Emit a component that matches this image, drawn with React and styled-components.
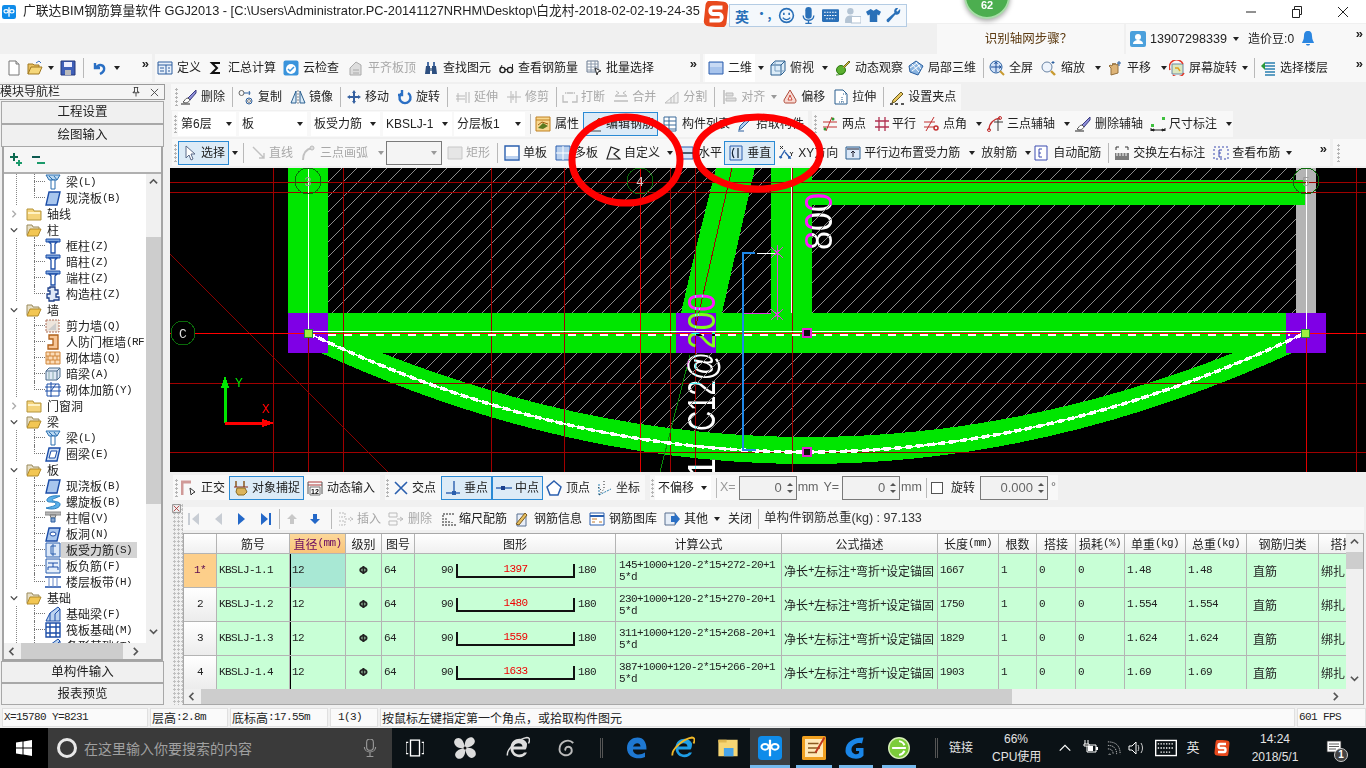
import React from 'react';
import styled, { createGlobalStyle } from 'styled-components';

const UI_FONT = '"Liberation Sans", "Noto Sans CJK SC", sans-serif';
const CJK_FONT = '"Noto Sans CJK SC", sans-serif';

const Global = createGlobalStyle`
  html, body { margin: 0; padding: 0; overflow: hidden; background: #f0f0f0; }
  * { box-sizing: border-box; }
`;

const icons = {
  newDoc: <><path d="M3 1h7l3 3v11H3z" fill="#fff" stroke="#777" /><path d="M10 1v3h3" fill="#ddd" stroke="#777" /></>,
  open: <><path d="M1 14V4h5l1 1h5v2" fill="#e8c060" stroke="#a07820" /><path d="M1 14l3-7h11l-3 7z" fill="#f5d77a" stroke="#a07820" /><path d="M9 3l3-2 2 2" fill="none" stroke="#3a70c0" /></>,
  save: <><path d="M1 1h14v14H1z" fill="#3f5fb8" stroke="#26397a" /><path d="M4 2h8v5H4z" fill="#eef" /><path d="M5 10h6v5H5z" fill="#bbb" /></>,
  undo: <path d="M3 3v5h5M4 8c3-5 9-3 8 2-.4 2-2 3-4 4" fill="none" stroke="#2a6fc4" strokeWidth="2.4" />,
  define: <><path d="M1 2h14v12H1z" fill="#e8f0fa" stroke="#2f5f9f" /><path d="M1 5h14M9 5v9M3 8h4M3 11h4M11 8h2M11 11h2" stroke="#2f5f9f" /></>,
  sigma: <path d="M12 3H4l5 5-5 5h8" fill="none" stroke="#111" strokeWidth="2" />,
  cloud: <><rect x="0.5" y="0.5" width="15" height="15" rx="2" fill="#3a94dc" /><circle cx="8" cy="9" r="5" fill="#fff" /><path d="M5 9l2 2 4-4" fill="none" stroke="#3a94dc" strokeWidth="1.5" /></>,
  flush: <><path d="M2 15V8l6-6 5 3v10z" fill="#ddd" stroke="#aaa" /><path d="M5 10h6M5 13h6" stroke="#aaa" /></>,
  binoc: <><path d="M2 14l1-8h4v8zM9 14V6h4l1 8z" fill="#2d4f80" /><path d="M4 2h2v4H4zM10 2h2v4h-2z" fill="#4a6fa5" /><path d="M7 8h2v3H7z" fill="#7a8fa8" /></>,
  glasses: <><circle cx="4.5" cy="10" r="2.6" fill="none" stroke="#222" strokeWidth="1.4" /><circle cx="12" cy="10" r="2.6" fill="none" stroke="#222" strokeWidth="1.4" /><path d="M7 9.5h2.5M2 9l2-4M14.5 9V4" stroke="#222" /></>,
  batch: <><path d="M1 1h11v11H1z" fill="#fff" stroke="#6a7a90" /><path d="M1 4h11M1 7h11M1 10h11M5 1v11M9 1v11" stroke="#8a98aa" /><path d="M9 8l6 3-3 1-1 3z" fill="#fff" stroke="#333" /></>,
  flat: <><path d="M1 2h14v12H1z" fill="#a8c4ec" stroke="#2c5fae" /><path d="M2 3h12v4H2z" fill="#c8daf4" /></>,
  topView: <><path d="M1 5l4-4h10v10l-4 4H1z" fill="#dcecf8" stroke="#2a5f8f" /><path d="M1 5h10v10M11 5l4-4" fill="none" stroke="#2a5f8f" /><path d="M5 1v10h10" fill="none" stroke="#7a9fc0" /></>,
  orbit: <><circle cx="6" cy="10" r="4.5" fill="#5cb030" stroke="#2d7a10" /><path d="M8 7l6-6 1 1-6 6" fill="#d8c040" stroke="#6a6a20" /><path d="M1 15c3 0 7-1 9-3" stroke="#3a8a20" fill="none" /></>,
  cube3d: <><path d="M8 1l7 5-5 9-8-3-1-6z" fill="#8ab4e0" stroke="#2a5f9f" /><path d="M4 4l7 8M8 2l5 7M2 8l7-5M4 11l8-6" stroke="#fff" /></>,
  full: <><circle cx="7" cy="7" r="6" fill="#cfe0f6" stroke="#2a5f9f" /><path d="M7 2v10M2 7h10M7 2L5.5 4M7 2l1.5 2M12 7l-2-1.5M12 7l-2 1.5" stroke="#1f4f9a" fill="none" /><path d="M11 11l4 4" stroke="#c89a30" strokeWidth="2" /></>,
  zoom: <><circle cx="6" cy="7" r="5" fill="#eef4fc" stroke="#6a84a4" /><path d="M10 11l4 4" stroke="#c89a30" strokeWidth="2.4" /><path d="M12 1v3M10.5 2.5h3" stroke="#2a5f9f" /></>,
  pan: <><path d="M4 15V8L2 6l1-1 2 1 1-3 1 2 1-2 1 2 2-1v9z" fill="#deb477" stroke="#94703c" /><path d="M12 1v5M10 3h4" stroke="#2a5f9f" /></>,
  screenRot: <><path d="M3 4h11v10H3z" fill="#dbe8bf" stroke="#6a88a4" /><path d="M6 8h3l2 3" stroke="#e0a020" fill="none" strokeWidth="1.4" /><path d="M1 10A7 7 0 0 1 14 4" fill="none" stroke="#e23a2a" strokeWidth="1.5" /><path d="M15 13A7 7 0 0 1 4 15" fill="none" stroke="#e23a2a" strokeWidth="1.5" /></>,
  floor: <><path d="M5 3h10M5 6h10M5 9h10M5 12h10M5 15h10" stroke="#2a7fb0" strokeWidth="1.6" /><path d="M1 6l4-4v8z" fill="#2b9a3a" /></>,
  brush: <><path d="M15 1l-8 8 2 2 6-7z" fill="#8d8fd8" stroke="#3a3a80" /><path d="M7 9c-3 0-3 3-5 4 3 2 6 0 7-2z" fill="#fff" stroke="#555" /><path d="M0 15h9" stroke="#222" /></>,
  copy: <><circle cx="3.5" cy="4" r="2.5" fill="none" stroke="#666" /><circle cx="11" cy="12" r="3" fill="none" stroke="#2a5f9f" /><circle cx="11" cy="12" r="1.5" fill="none" stroke="#888" /><path d="M6 4h6l-1-2M12 4l-1 2" fill="none" stroke="#2a5f9f" /></>,
  mirror: <><path d="M1 14L6 2v12zM15 14L10 2v12z" fill="#dcecf8" stroke="#2a5f8f" /><path d="M8 1v14" stroke="#888" strokeDasharray="2 1" /></>,
  move: <path d="M8 1l2 3H9v3h3V6l3 2-3 2V9H9v3h1l-2 3-2-3h1V9H4v1L1 8l3-2v1h3V4H6z" fill="#3560a0" />,
  rotate: <path d="M5 4a5.5 5.5 0 1 0 6 0M5 1v5H1" fill="none" stroke="#2a6fc4" strokeWidth="2.4" />,
  extend: <path d="M1 7h9M1 10h9M11 3v11M14 3v11M3 4v9" stroke="#b8b8b8" fill="none" />,
  trim: <path d="M1 8h14M5 2v12M10 2v12M7 5v6" stroke="#b8b8b8" fill="none" />,
  breakIt: <><path d="M1 6v7h5M15 6v7h-5M5 4h6" stroke="#bdbdbd" fill="none" strokeWidth="1.3" /><path d="M3 3l2 1-2 1M13 3l-2 1 2 1" fill="#bdbdbd" /></>,
  merge: <><path d="M2 7h12M1 12h14" stroke="#bdbdbd" strokeWidth="1.3" /><path d="M3 2l3 2-3 2M13 2l-3 2 3 2" fill="none" stroke="#bdbdbd" /></>,
  split: <><path d="M1 14L14 3v11z" fill="#f0f0f0" stroke="#bdbdbd" /><path d="M7 8v6M10 6v8" stroke="#bdbdbd" /></>,
  align: <><path d="M2 1v14" stroke="#bbb" strokeWidth="1.5" /><path d="M4 4h7v3H4zM4 9h10v3H4z" fill="#ddd" stroke="#bbb" /></>,
  offset: <><path d="M8 1l6 10c0 3-1 3-2 3H4c-1 0-2 0-2-3z" fill="#f7d9d2" stroke="#b04a3a" /><path d="M8 6l2 5H6z" fill="#fff" stroke="#d04a3a" /></>,
  stretch: <><path d="M2 1h8l4 4v10H2z" fill="#fff" stroke="#2a5f8f" /><path d="M10 5h4M9 8v5M6 13h5" stroke="#2a5f8f" strokeDasharray="1 1" /></>,
  gripPt: <><path d="M1 15h3M6 15h3M12 15h3" stroke="#222" strokeWidth="1.6" /><path d="M4 11l8-8 2 2-8 8-3 1z" fill="#e8c860" stroke="#6a5a20" /></>,
  prop: <><path d="M1 1h14v14H1z" fill="#f8d890" stroke="#c08020" /><path d="M1 4h14" stroke="#c08020" /><path d="M3 12l5-5 5 3-5 3z" fill="#5a7a20" /><path d="M3 9l4-3 6 2" stroke="#a06010" fill="none" /></>,
  editBar: <><path d="M2 14l2-4 8-8 3 3-8 8z" fill="#f0c040" stroke="#7a5a20" /><path d="M3 15h11" stroke="#444" /></>,
  list: <><path d="M2 1h12v14H2z" fill="#fff" stroke="#3a6a9a" /><path d="M2 5h12M2 9h12M2 13h12M7 1v14" stroke="#3a6a9a" /></>,
  pick: <path d="M3 14l1-4 8-8 2 2-8 8zM2 15h6" fill="#b0ccee" stroke="#2a5f9f" />,
  twoPt: <><path d="M1 6h14M1 11h14M10 1L4 15" stroke="#c23030" /><circle cx="11" cy="3" r="1.5" fill="#2f9a30" /><circle cx="3" cy="13" r="1.5" fill="#2f9a30" /></>,
  parallel: <path d="M1 5h14M1 11h14M5 1v14M11 1v14" stroke="#b03050" strokeWidth="1.3" />,
  anglePt: <><path d="M1 6h11M1 11h11M11 1L3 15" stroke="#c23030" /><circle cx="13" cy="12" r="2" fill="none" stroke="#c23030" strokeWidth="1.5" /></>,
  arcPt: <><path d="M2 14C2 7 7 3 13 2" fill="none" stroke="#c23030" strokeWidth="1.4" /><circle cx="2" cy="14" r="1.5" fill="none" stroke="#c23030" /><circle cx="13" cy="2" r="1.5" fill="none" stroke="#c23030" /><path d="M7 6h9M11 3v12" stroke="#3a3a3a" /></>,
  dim: <><path d="M1 12v3M15 12v3M1 14h14M1 14l3-1v2zM15 14l-3-1v2z" stroke="#222" fill="#222" /><rect x="1" y="8" width="3" height="3" fill="#3fc03f" /><rect x="12" y="1" width="3" height="3" fill="#3fc03f" /></>,
  cursor: <path d="M4 1v12l3-3 2 5 2-1-2-5h4z" fill="#fff" stroke="#5a6a88" />,
  lineTool: <path d="M2 2l11 11M13 8v5H8" fill="none" stroke="#c2c2c2" strokeWidth="1.4" />,
  arcTool: <><path d="M3 15C3 8 7 4 12 3" fill="none" stroke="#c2c2c2" strokeWidth="2" /><circle cx="12" cy="3" r="2" fill="#ddd" stroke="#bbb" /></>,
  rectTool: <path d="M1 2h14v12H1z" fill="#e6e6e6" stroke="#c8c8c8" />,
  single: <><path d="M1 1h14v14H1z" fill="#fff" stroke="#2a5fae" strokeWidth="1.4" /><path d="M2 11h12v3H2z" fill="#bcd2f0" /></>,
  multi: <><path d="M1 1h14v14H1z" fill="#b9d0ee" stroke="#2a5fae" /><path d="M8 1v14M1 8h14" stroke="#fff" /></>,
  custom: <path d="M2 14L6 2l8 3-5 4 6 5z" fill="none" stroke="#222" strokeWidth="1.2" />,
  horiz: <><path d="M1 2h14v12H1z" fill="#d5e4f7" stroke="#2a5fae" /><path d="M1 8h14" stroke="#123" strokeWidth="1.4" /></>,
  vert: <><path d="M2 1h12v14H2z" fill="#d5e4f7" stroke="#2a5fae" /><path d="M6 3c-2 3-2 7 0 10M10 3v10" fill="none" stroke="#123" strokeWidth="1.2" /></>,
  xyDir: <><path d="M2 13l5-8M2 13l2-1M2 13V11" stroke="#2a5fae" fill="none" strokeWidth="1.4" /><path d="M7 7l5 6-2 0M12 13v-2" stroke="#2a5fae" fill="none" strokeWidth="1.4" /><path d="M2 1l3 3M5 1L2 4M12 7l1.5 2 1.5-2M13.5 9v2" stroke="#333" fill="none" /></>,
  edgeBars: <><path d="M1 2h14v12H1z" fill="#dbe8f8" stroke="#2a5f8f" /><path d="M2 4h12M8 12V6M6 8l2-2 2 2" stroke="#223" fill="none" /></>,
  auto: <><path d="M2 1h12v14H2z" fill="#fff" stroke="#3a4ab0" /><path d="M9 4H6v8h3M6 8h2" stroke="#3a4ab0" fill="none" /></>,
  swap: <><path d="M1 8h14v7H1z" fill="#7a7a7a" /><path d="M3 8v3M6 8v3M9 8v3M12 8v3" stroke="#fff" /><path d="M2 2h3M2 2v3M14 2h-3M14 2v3" stroke="#333" /></>,
  viewBar: <><path d="M1 2h14v12H1z" fill="none" stroke="#3a4ab0" strokeDasharray="2 2" /><path d="M9 5H6v7h3M6 8h2" stroke="#3a4ab0" fill="none" /></>,
  ortho: <><path d="M1 15V2h9" fill="none" stroke="#d09a98" strokeWidth="3" /><path d="M9 8l5 4-2 1-2 2z" fill="#fff" stroke="#333" /></>,
  snap: <><path d="M3 1v6M11 1v6" stroke="#8a5a20" strokeWidth="1.5" /><path d="M1 7h14" stroke="#8a2a20" /><path d="M4 8h8l2 4-3 3H5l-2-3z" fill="#dcb45c" stroke="#8a6a20" /></>,
  dynInput: <><path d="M1 2h14M1 5h14" stroke="#b03a3a" /><path d="M1 2v12M15 2v12" stroke="#555" /><path d="M3 7h10v8H3z" fill="#fff" stroke="#777" /><text x="4" y="14" fontSize="7" fontFamily="Liberation Sans" fontWeight="700">12</text></>,
  crossPt: <path d="M2 2l12 12M14 2L2 14" stroke="#2a5fae" strokeWidth="1.6" />,
  perpPt: <><path d="M1 13h14" stroke="#2a5fae" strokeWidth="1.4" /><path d="M9 1v12" stroke="#2a5fae" strokeWidth="1.4" /><rect x="7" y="11" width="4" height="4" fill="#2a5fae" /></>,
  midPt: <><path d="M0 8h16" stroke="#2a5fae" strokeWidth="1.4" /><rect x="5" y="6" width="4" height="4" fill="#1a3f8e" /></>,
  vertexPt: <path d="M8 1l7 6-3 8H4L1 7z" fill="#fff" stroke="#2a5fae" strokeWidth="1.5" />,
  coord: <><path d="M3 15V3M3 15L15 9" stroke="#2a7fb0" strokeDasharray="2 1" /><path d="M2 7l3 3M8 1v8l-5 6" stroke="#222" strokeDasharray="1 2" fill="none" /></>,
  navFirst: <path d="M3 2h2v12H3zM14 2v12L7 8z" fill="#c8cdd4" />,
  navPrev: <path d="M12 2v12L5 8z" fill="#c8cdd4" />,
  navNext: <path d="M5 2v12l7-6z" fill="#2468c8" />,
  navLast: <path d="M3 2v12l7-6zM11 2h2v12h-2z" fill="#2468c8" />,
  rowUp: <path d="M8 3l5 5h-3v5H6V8H3z" fill="#c8c8c8" />,
  rowDown: <path d="M8 13L3 8h3V3h4v5h3z" fill="#2468c8" />,
  insert: <path d="M1 2h6v4H1M1 10h6v4H1M7 8h8M12 6l3 2-3 2" fill="none" stroke="#bbb" strokeDasharray="2 1" />,
  delRow: <path d="M1 2h8v4H1zM1 10h8v4H1zM9 8h6M12 6l3 2-3 2" fill="none" stroke="#bbb" />,
  scale: <path d="M2 15V3h11M5 15V7M8 15V9M11 15v-4M14 15v-2" fill="none" stroke="#222" strokeDasharray="2 1" />,
  info: <><path d="M3 3h9v12H3z" fill="#e8eef8" stroke="#5a7090" /><path d="M2 13L11 2l2 2-8 10z" fill="#e8c060" stroke="#7a5a20" /></>,
  library: <><path d="M1 2h14v12H1z" fill="#fff" stroke="#2a5fae" /><path d="M1 5h14" stroke="#2a5fae" strokeWidth="2" /><path d="M3 8h5M3 11h3M10 11h3" stroke="#c0782a" /></>,
  other: <><path d="M1 2h10v12H1z" fill="#e6eef8" stroke="#5a7090" /><path d="M7 5h4V2l5 6-5 6v-3H7z" fill="#2a6fc4" /></>,
  closeSmall: <><path d="M1 1h14v14H1z" fill="#eee" stroke="#555" /><path d="M3 3l10 10M13 3L3 13" stroke="#a33" strokeWidth="1.5" /></>,
  beam: <><path d="M1 1h14l-3 5H4z" fill="#b9d8f2" stroke="#2a6fb0" /><path d="M6 6h4v9H6z" fill="#fff" stroke="#2a6fb0" /><path d="M4 2l4 4M9 2l3 4" stroke="#2a6fb0" /></>,
  slab: <path d="M4 2h11l-3 13H1z" fill="#a8c6ee" stroke="#1c4ea8" strokeWidth="1.4" />,
  ring: <><path d="M4 2h11l-3 13H1z" fill="#cfe0f6" stroke="#1c4ea8" strokeWidth="1.4" /><path d="M6 5h6l-2 7H4z" fill="#fff" stroke="#1c4ea8" /></>,
  column: <><path d="M1 1h14v3H1z" fill="#7fa6de" stroke="#1c4ea8" /><path d="M4 4h8l-2 2v9H6V6z" fill="#fff" stroke="#1c4ea8" strokeWidth="1.3" /></>,
  tieCol: <path d="M5 1h5v3h3v4h-2v3h3v3H9v1H4v-3H2V8h3V5H3V2h2z" fill="#dfe8f6" stroke="#1c3e88" strokeWidth="1.3" />,
  shear: <><path d="M1 2h13v12H1z" fill="#eee5dc" stroke="#b0705a" strokeDasharray="2 1" /><path d="M3 12l8-7v7z" fill="#ccc" /></>,
  door: <path d="M4 1h9v14H3v-4h5V5H4z" fill="#f7c596" stroke="#b0601a" strokeWidth="1.3" />,
  brick: <><path d="M1 2h14v12H1z" fill="#fbdcb8" stroke="#d0863a" /><path d="M1 6h14M1 10h14M5 2v4M10 2v4M3 6v4M8 6v4M12 6v4M5 10v4M10 10v4" stroke="#d0863a" /></>,
  hidden: <><path d="M1 5l3-3h11v9l-3 3H1z" fill="#dfe9f5" stroke="#4a6a8a" /><path d="M1 5h11v9M12 5l3-3" fill="none" stroke="#4a6a8a" /><path d="M4 6v7M8 6v7" stroke="#8aa" /></>,
  wallBar: <><path d="M2 2h12v12H2z" fill="#fff" stroke="#1c4ea8" /><path d="M0 5h16M0 9h16M6 0v15M11 2l-5 7" stroke="#1c4ea8" /></>,
  spiral: <path d="M15 2C8 1 1 3 2 7c1 2 9 0 9 3 0 2-6 3-10 4 5 2 13 1 14-3 1-4-7-3-8-5 0-1 4-2 8-4z" fill="#5ab0ea" stroke="#2a80c0" />,
  cap: <><path d="M0 2h16v3H0z" fill="#b8b8b8" stroke="#888" /><path d="M5 5h6l-1 3H6z" fill="#ccc" stroke="#777" /><path d="M6 8h4v4H6z" fill="#8aa8d0" stroke="#2a5f9f" /></>,
  hole: <><path d="M4 2h11l-3 13H1z" fill="#a8c6ee" stroke="#1c4ea8" strokeWidth="1.4" /><ellipse cx="8" cy="8" rx="3" ry="2" fill="#fff" stroke="#1c4ea8" /></>,
  rebar: <><path d="M1 1h14v14H1z" fill="#dce8f8" stroke="#2a5fae" /><path d="M11 4H6v8h5M8 2v12" fill="none" stroke="#2a5fae" /></>,
  negBar: <><path d="M1 1h14v14H1z" fill="#e6effa" stroke="#2a5fae" /><path d="M3 5h10M3 9h10M8 5v4M3 9v3M13 9v3" stroke="#1c4ea8" fill="none" /></>,
  band: <><path d="M0 3h16M0 13h16" stroke="#1c4ea8" strokeWidth="1.5" /><path d="M4 3v10M8 3v10M12 3v10" stroke="#6a8ac8" /></>,
  footBeam: <><path d="M1 15l4-8 8-6 2 2v12z" fill="#bcd4f0" stroke="#1c4ea8" /><path d="M5 7v8M10 8v7M10 8l5-5" stroke="#1c4ea8" /></>,
  raft: <><path d="M1 1h14v14H1z" fill="#fff" stroke="#1c4ea8" strokeWidth="1.4" /><path d="M1 5h14M1 11h14M5 1v14M11 1v14" stroke="#1c4ea8" strokeWidth="1.4" /></>,
  plusNode: <><path d="M3 5h8M7 1v8" stroke="#0d6a50" strokeWidth="2" /><path d="M9 11h6M12 8v6" stroke="#1a9a6a" strokeWidth="2" /></>,
  minusNode: <><path d="M1 5h8" stroke="#0d5a50" strokeWidth="2" /><path d="M6 11h8" stroke="#1a9a6a" strokeWidth="2" /></>,
  pin: <path d="M5 2h6M6 2v6H4v1h8V8h-2V2M8 9v5" fill="none" stroke="#222" />,
  folderClosed: <><path d="M1 3h6l1 2h7v9H1z" fill="#f4d37a" stroke="#b4943a" /><path d="M2 6h12v2H2z" fill="#fff2c4" /></>,
  folderOpen: <><path d="M1 13V3h5l1 2h6v2" fill="#e8e0c8" stroke="#9a8a5a" /><path d="M1 14l3-7h11l-3 7z" fill="#f2c653" stroke="#b08a2a" /></>,
  user: <><rect width="16" height="16" rx="2" fill="#4ba0dc" /><circle cx="8" cy="6" r="3" fill="#fff" /><path d="M3 13c0-3 3-4 5-4s5 1 5 4z" fill="#fff" /></>,
  bell: <path d="M8 0c3 0 4 2 4 5 0 4 2 6 2 7H2c0-1 2-3 2-7 0-3 1-5 4-5zM6 13h4c0 2-4 2-4 0z" fill="#2b86e0" />,
  smile: <><circle cx="8" cy="8" r="6.5" fill="none" stroke="#2a70b8" strokeWidth="1.5" /><path d="M5.5 5.5v2M10.5 5.5v2" stroke="#2a70b8" strokeWidth="1.5" /><path d="M4.5 10c2 2.5 5 2.5 7 0" fill="none" stroke="#2a70b8" strokeWidth="1.3" /></>,
  micBlue: <><rect x="5" y="0" width="6" height="11" rx="3" fill="#2a70b8" /><path d="M3 8c0 6 10 6 10 0M8 13v3M5 15.5h6" fill="none" stroke="#2a70b8" strokeWidth="1.3" /></>,
  keysBlue: <><rect y="2" width="16" height="12" rx="1" fill="#2a70b8" /><path d="M2 5h12M2 8h12M4 11h8" stroke="#fff" strokeDasharray="1.5 1" /></>,
  personCard: <><circle cx="6" cy="4" r="3" fill="#b4c4d4" /><path d="M1 13c0-4 3-5 5-5h2v7H1z" fill="#b4c4d4" /><path d="M7 9h9v6H7z" fill="#fff" stroke="#b4c4d4" /></>,
  shirt: <path d="M5 1l3 2 3-2 5 3-2 4-2-1v8H4V7L2 8 0 4z" fill="#2a70b8" />,
  wrench: <path d="M15 1l-3 3-1-1 2-3c-3-1-5 2-4 5L1 12c-1 1 0 4 2 3l7-8c3 1 6-2 5-6z" fill="#2a70b8" />,
  winLogo: <path d="M0 2.5l6.5-1v6H0zM7.5 1.4L16 0v7.5H7.5zM0 8.5h6.5v6L0 13.5zM7.500 8.5H16V16l-8.5-1.4z" fill="#fff" />,
  micGray: <><rect x="5" y="0" width="6" height="10" rx="3" fill="none" stroke="#999" /><path d="M3 7c0 6 10 6 10 0M8 12v3M5 15.5h6" fill="none" stroke="#999" /></>,
  taskView: <><rect x="4" y="1" width="8" height="14" fill="none" stroke="#fff" strokeWidth="1.2" /><path d="M2 3H0v10h2M14 3h2v10h-2" fill="none" stroke="#fff" /></>,
  fan: <><path d="M8 8C2 9 0 5 1 3c2-3 6-2 7 5zM8 8c-1-6 3-8 5-7 3 2 2 6-5 7zM8 8c6-1 8 3 7 5-2 3-6 2-7-5zM8 8c1 6-3 8-5 7-3-2-2-6 5-7z" fill="#dcdcdc" /><circle cx="8" cy="8" r="1" fill="#111" /></>,
  ieGray: <><path d="M13 9H5c0 4 6 4 7 2h2c-2 5-11 4-11-3s9-8 11-3c0 1 0 3-1 4zM5 7h6c0-3-5-3-6 0z" fill="#ddd" /><path d="M1 13C0 9 8 2 14 1c2 0 2 2 1 4" fill="none" stroke="#ddd" /></>,
  swirl: <path d="M13 4c-4-4-11-1-11 5 0 4 5 6 8 4 3-2 2-6-1-6-2 0-3 2-2 3" fill="none" stroke="#bbb" strokeWidth="1.5" />,
  edge: <path d="M2 8c0-5 4-7 7-7 4 0 6 3 6 8H6c0 4 5 4 8 2v3c-4 2-12 1-12-6zM6 7h5c0-3-4-3-5 0z" fill="#1e78d2" />,
  ieColor: <><path d="M13 9H5c0 4 6 4 7 2h2c-2 5-11 4-11-3s9-8 11-3c0 1 0 3-1 4zM5 7h6c0-3-5-3-6 0z" fill="#1e9ee6" /><path d="M1 13C0 9 8 2 14 1c2 0 2 2 1 4" fill="none" stroke="#f0b828" strokeWidth="1.2" /></>,
  folderTask: <><path d="M1 2h14v12H1z" fill="#f6d674" /><path d="M1 2h6v2H1z" fill="#e0b850" /><path d="M5 8h7v6H5z" fill="#48a4e8" /></>,
  glodon: <><rect width="16" height="16" rx="2.5" fill="#0f8cea" /><path d="M8 2.5v11" stroke="#fff" strokeWidth="1.5" /><ellipse cx="4.7" cy="7.2" rx="2.4" ry="1.9" fill="none" stroke="#fff" strokeWidth="1.3" /><ellipse cx="11.3" cy="7.2" rx="2.4" ry="1.9" fill="none" stroke="#fff" strokeWidth="1.3" /></>,
  notes: <><rect width="16" height="16" rx="1" fill="#f0a020" /><path d="M2 2h12v12H2z" fill="#ffe9b8" /><path d="M4 5h7M4 8h8M4 11h6" stroke="#8a5a20" /><path d="M9 11l6-10" stroke="#c03a20" strokeWidth="1.3" /></>,
  gApp: <path d="M13 1C6 1 1 4 1 10c0 5 9 7 12 3V8H8v2h2c1 3-5 3-5-1 0-3 4-5 7-4z" fill="#1a86e8" />,
  greenE: <><circle cx="8" cy="8" r="7.5" fill="#7ccc3a" stroke="#d8f0b8" /><path d="M3 8h10M8 3a5 5 0 0 1 4 3M8 13a5 5 0 0 0 4-3" stroke="#fff" strokeWidth="1.4" fill="none" /></>,
  chevronUp: <path d="M2 11l6-6 6 6" fill="none" stroke="#fff" strokeWidth="1.4" />,
  plug: <><path d="M5 5h9v7H5z" fill="none" stroke="#fff" /><path d="M6 6h5v5H6zM14 7h2v3h-2z" fill="#fff" /><path d="M3 0v4M6 0v4M2 4h5v2H2z" stroke="#fff" /></>,
  wifi: <path d="M3 15a1.5 1.5 0 1 0 .1 0M1 9c4 0 6 2 6 6M1 5c7 0 10 4 10 10M1 1c10 0 14 5 14 14" fill="none" stroke="#ccc" strokeDasharray="1.5 1" />,
  speaker: <><path d="M1 6h3l4-4v12l-4-4H1z" fill="none" stroke="#fff" /><path d="M10 5c1 2 1 4 0 6M13 3c2 3 2 7 0 10" fill="none" stroke="#ccc" /></>,
  keyboard: <><rect x="0.5" y="2.5" width="15" height="11" fill="none" stroke="#fff" /><path d="M2 5h12M2 8h12M4 11h8" stroke="#fff" strokeDasharray="1 1" /></>,
  sRed: <><rect x="1" y="0" width="14" height="16" rx="3" transform="rotate(6 8 8)" fill="#e8491d" /><path d="M12 4H6C4 4 4 8 6 8h4c2 0 2 4 0 4H4" fill="none" stroke="#fff" strokeWidth="2.4" /></>,
  notify: <path d="M1 1h14v11H1zM3 4h10M3 6.5h10M3 9h7" fill="#fff" stroke="#333" strokeWidth="0.8" />,
};

const IconSvg = styled.svg`
  display: block;
  flex: none;
`;
const I = ({ n, s = 16 }) => (
  <IconSvg viewBox="0 0 16 16" width={s} height={s}>{icons[n]}</IconSvg>
);

const Latin = styled.span`
  font-family: "Liberation Mono", monospace;
  font-size: 11px;
  letter-spacing: -0.6px;
`;
// bitmap style mix: ascii is half the width of a chinese char
const Mix = ({ children }) => String(children).split(/([\x00-\x7f]+)/).map((s, i) => (
  /^[\x00-\x7f]+$/.test(s) ? <Latin key={i}>{s}</Latin> : s
));

const Page = styled.div`
  position: relative;
  width: 1366px;
  height: 768px;
  overflow: hidden;
  display: flex;
  flex-direction: column;
  background: #f0f0f0;
  font: 12px/1 ${UI_FONT};
  color: #222;
`;
const Slot = styled.span`
  flex: none;
  margin-left: ${(p) => p.$ml || 0}px;
  font-size: ${(p) => (p.$fs ? `${p.$fs}px` : 'inherit')};
`;

/* title */
const TitleBar = styled.div`
  height: 23px;
  flex: none;
  background: #fff;
  display: flex;
  align-items: center;
  padding-left: 2px;
`;
const TitleText = styled.div`
  margin-left: 7px;
  font-size: 12.8px;
  white-space: nowrap;
  color: #222;
`;
const WinButtons = styled.div`
  margin-left: auto;
  display: flex;
  align-items: center;
  height: 100%;
`;
const WinBtn = styled.div`
  width: 46px;
  height: 100%;
  display: flex;
  align-items: center;
  justify-content: center;
`;

const AccountRow = styled.div`
  height: 31px;
  flex: none;
  display: flex;
  justify-content: flex-end;
  padding-top: 1px;
  gap: 2px;
`;
const HelpPanel = styled.div`
  width: 187px;
  background: #f8f8f8;
  display: flex;
  align-items: center;
  justify-content: center;
  padding-right: 4px;
  color: #5c3a10;
  font-size: 12.5px;
`;
const UserPanel = styled.div`
  width: 240px;
  background: #f8f8f8;
  display: flex;
  align-items: center;
  padding-left: 4px;
`;
const More = styled.span`
  font-size: 13px;
  font-weight: 700;
  line-height: 1;
  color: #222;
  align-self: flex-start;
  margin: 3px 0 0 auto;
  padding-right: 3px;
`;

/* toolbars */
const ToolRow = styled.div`
  display: flex;
  height: ${(p) => p.$h || 26}px;
  margin-top: ${(p) => p.$mt || 0}px;
  margin-left: ${(p) => p.$ml || 0}px;
  gap: ${(p) => p.$gap || 3}px;
  flex: none;
`;
const Band = styled.div`
  display: flex;
  align-items: center;
  background: #f8f8f8;
  width: ${(p) => (p.$w ? `${p.$w}px` : 'auto')};
  padding-left: ${(p) => p.$pl || 0}px;
  flex: ${(p) => (p.$grow ? '1' : 'none')};
`;
const Grip = styled.div`
  width: 3px;
  height: 18px;
  flex: none;
  margin: ${(p) => p.$m || '0 3px 0 2px'};
  background: radial-gradient(circle at 1.5px 1.5px, #b5b5b5 1.2px, transparent 1.3px) 0 0 / 3px 4px;
`;
const Sep = styled.div`
  width: 1px;
  height: 20px;
  flex: none;
  background: #b9b9b9;
  margin: ${(p) => p.$m || '0 5px 0 7px'};
`;
const ToolItem = styled.div`
  display: flex;
  align-items: center;
  flex: none;
  height: ${(p) => (p.$on ? '24px' : '100%')};
  gap: ${(p) => p.$gap || 4}px;
  margin-left: ${(p) => p.$ml}px;
  padding: ${(p) => (p.$on ? '0 3px' : '0')};
  color: ${(p) => (p.$muted ? '#a8a8a8' : '#222')};
  border: ${(p) => (p.$on ? '1px solid #2a8ad4' : '0')};
  background: ${(p) => (p.$on ? '#dcebf7' : 'transparent')};
  white-space: nowrap;
`;
const ModeBtn = styled.div`
  width: 50px;
  height: 100%;
  flex: none;
  background: #fff;
  display: flex;
  align-items: center;
  gap: 4px;
  padding-left: 3px;
`;
const Caret = styled.span`
  width: 0;
  height: 0;
  flex: none;
  margin-left: ${(p) => p.$ml ?? 2}px;
  border-left: 3.5px solid transparent;
  border-right: 3.5px solid transparent;
  border-top: 4px solid ${(p) => (p.$muted ? '#999' : '#222')};
`;
const TotalText = styled.span`
  font-size: 12.5px;
  color: #333;
`;

// [label, icon, opts], 'sep' or ['sep', margin]
const isSep = (t) => t === 'sep' || (Array.isArray(t) && t[0] === 'sep');
const Tools = ({ items }) => items.map((t, i) => {
  if (isSep(t)) return <Sep key={i} $m={Array.isArray(t) ? t[1] : undefined} />;
  const [label, icon, o = {}] = t;
  const ml = o.ml ?? (i === 0 || isSep(items[i - 1]) ? 0 : 8);
  return (
    <ToolItem key={i} $ml={ml} $muted={o.muted} $on={o.on} $gap={o.gap}>
      {icon && <I n={icon} />}
      {label && <span>{label}</span>}
      {o.caret && <Caret $ml={o.cm} $muted={o.muted} />}
    </ToolItem>
  );
});

const Combo = styled.div`
  width: ${(p) => p.$w}px;
  height: ${(p) => p.$h || 24}px;
  flex: none;
  margin-left: ${(p) => p.$ml || 0}px;
  background: ${(p) => (p.$empty ? '#f4f4f4' : '#fff')};
  border: ${(p) => (p.$empty ? '1px solid #7a7a7a' : '0')};
  display: flex;
  align-items: center;
  justify-content: space-between;
  padding: 0 4px 0 3px;
`;

/* workspace */
const Workspace = styled.div`
  flex: 1;
  display: flex;
  min-height: 0;
`;
const LeftPanel = styled.div`
  width: 165px;
  flex: none;
  padding-top: 2px;
  display: flex;
  flex-direction: column;
`;
const PanelTitle = styled.div`
  height: 16px;
  flex: none;
  display: flex;
  align-items: center;
  border: 1px solid #9a9a9a;
  border-left: 0;
  background: #f4f4f4;
  gap: 8px;
  padding-right: 5px;
  margin-bottom: 1px;
  span:first-child { margin-right: auto; }
`;
const NavBtn = styled.div`
  height: ${(p) => p.$h || 22}px;
  flex: none;
  display: flex;
  align-items: center;
  justify-content: center;
  border: 1px solid #a8a8a8;
  background: #f0f0f0;
  margin: 0 1px;
  font-size: 12.5px;
`;
const TreeBox = styled.div`
  height: 514px;
  flex: none;
  margin: 0 2px 0 2px;
  border: 2px solid #a4a4a4;
  border-top-width: 0;
  display: flex;
  flex-direction: column;
  background: #fff;
`;
const TreeTools = styled.div`
  height: 27px;
  flex: none;
  background: #f6f6f6;
  border-bottom: 2px solid #b0b0b0;
  display: flex;
  align-items: center;
  gap: 8px;
  padding-left: 3px;
`;
const TreeMid = styled.div`
  flex: 1;
  display: flex;
  min-height: 0;
`;
const TreeList = styled.div`
  flex: 1;
  overflow: hidden;
`;
const TreeRow = styled.div`
  position: relative;
  height: 16px;
  display: flex;
  align-items: center;
  font-family: ${CJK_FONT};
  padding-left: ${(p) => (p.$leaf ? 41 : 6)}px;
  white-space: nowrap;
  background: ${(p) => (p.$leaf ? 'linear-gradient(#888 50%, transparent 50%) 12px 0 / 1px 2px repeat-y' : 'none')};
  &::before {
    content: '';
    display: ${(p) => (p.$leaf ? 'block' : 'none')};
    position: absolute;
    left: 30px;
    top: 7px;
    width: 11px;
    border-top: 1px dotted #777;
  }
  &::after {
    content: '';
    display: ${(p) => (p.$leaf ? 'block' : 'none')};
    position: absolute;
    left: 30px;
    top: -1px;
    height: ${(p) => (p.$last ? '9px' : '18px')};
    border-left: 1px dotted #777;
  }
`;
const Chevron = styled.span`
  width: 8px;
  height: 8px;
  flex: none;
  margin-right: 8px;
`;
const TreeText = styled.span`
  display: flex;
  align-items: center;
  height: 16px;
  padding: 0 ${(p) => (p.$sel ? '5px' : '0')} 0 5px;
  background: ${(p) => (p.$sel ? '#d4d4d4' : 'transparent')};
`;
const VScroll = styled.div`
  width: ${(p) => p.$w || 15}px;
  flex: none;
  background: #f0f0f0;
  display: flex;
  flex-direction: column;
  align-items: center;
`;
const ThumbV = styled.div`
  width: 100%;
  height: ${(p) => p.$h}px;
  margin-top: ${(p) => p.$mt}px;
  background: #cdcdcd;
  flex: none;
`;
const ArrowBtn = styled.div`
  height: ${(p) => p.$s || 16}px;
  width: ${(p) => p.$s || 16}px;
  flex: none;
  display: flex;
  align-items: center;
  justify-content: center;
  margin-top: ${(p) => p.$mt || 0}px;
  margin-left: ${(p) => p.$ml || 0}px;
`;
const ArrowEnd = styled(ArrowBtn)`
  margin-left: auto;
  margin-right: 18px;
`;
const HScroll = styled.div`
  height: ${(p) => p.$h || 16}px;
  flex: none;
  background: #f0f0f0;
  display: flex;
  align-items: center;
`;
const ThumbH = styled.div`
  height: 100%;
  width: ${(p) => p.$w}px;
  margin-left: ${(p) => p.$ml || 0}px;
  background: #cdcdcd;
  flex: none;
`;

const Arrow = ({ d }) => {
  const paths = { up: 'M1 6l4-4 4 4', down: 'M1 2l4 4 4-4', left: 'M6 1L2 5l4 4', right: 'M2 1l4 4-4 4' };
  return (
    <IconSvg viewBox="0 0 10 10" width="9" height="9">
      <path d={paths[d]} fill="none" stroke="#555" strokeWidth="1.8" />
    </IconSvg>
  );
};

const Right = styled.div`
  flex: 1;
  min-width: 0;
  padding: 2px 0 0 5px;
  display: flex;
  flex-direction: column;
`;
const Canvas = styled.div`
  height: 304px;
  margin: 2px 0 3px;
  flex: none;
  background: #000;
  overflow: hidden;
  svg { display: block; }
`;
const CadText = styled.text`
  font-family: "Liberation Sans", sans-serif;
  font-size: 38px;
  fill: #fff;
  mix-blend-mode: difference;
`;
const AxisText = styled.text`
  font-family: "Liberation Mono", monospace;
  font-size: 13px;
  fill: ${(p) => p.$c || '#9a9a9a'};
  text-anchor: middle;
`;

const Spin = styled.div`
  width: ${(p) => p.$w}px;
  height: 24px;
  flex: none;
  margin-left: ${(p) => p.$ml || 0}px;
  background: #f2f2f2;
  border: 1px solid #7a7a7a;
  display: flex;
  align-items: center;
  justify-content: flex-end;
  color: #666;
  font-size: 13px;
  padding-right: 2px;
  gap: 4px;
`;
const SpinArrows = styled.div`
  display: flex;
  flex-direction: column;
  gap: 4px;
  width: 8px;
  align-items: center;
`;
const SpinArrow = styled.span`
  width: 0;
  height: 0;
  border-left: 3px solid transparent;
  border-right: 3px solid transparent;
  border-${(p) => (p.$up ? 'bottom' : 'top')}: 3px solid #555;
`;
const SmallText = styled.span`
  flex: none;
  margin-left: ${(p) => p.$ml || 0}px;
  color: ${(p) => p.$c || '#666'};
  font-size: ${(p) => p.$fs || 12.5}px;
`;
const Check = styled.span`
  width: 12px;
  height: 12px;
  flex: none;
  margin-left: ${(p) => p.$ml || 0}px;
  background: #fff;
  border: 1px solid #555;
`;

const Lower = styled.div`
  flex: 1;
  margin: 4px 0 0 2px;
  display: flex;
  min-height: 0;
`;
const LowerGrip = styled.div`
  width: 11px;
  flex: none;
  background: radial-gradient(circle at 1.5px 1.5px, #c0c0c0 1.2px, transparent 1.3px) 1px 12px / 4px 4px;
`;
const LowerBody = styled.div`
  flex: 1;
  min-width: 0;
  display: flex;
  flex-direction: column;
  padding-right: 2px;
`;
const GridShell = styled.div`
  margin-top: 3px;
  height: 172px;
  flex: none;
  border: 1px solid #a8a8a8;
  background: #f0f0f0;
  display: flex;
  flex-direction: column;
`;
const GridMid = styled.div`
  flex: 1;
  display: flex;
  min-height: 0;
`;
const GridClip = styled.div`
  flex: 1;
  overflow: hidden;
  min-width: 0;
`;
const Table = styled.div`
  display: grid;
  width: 1204px;
  grid-template-columns: 33px 73px 56px 36px 33px 201px 166px 156px 61px 38px 39px 49px 61px 61px 72px 72px;
  grid-template-rows: 20px repeat(4, 34px);
  font-family: ${CJK_FONT};
`;
const Head = styled.div`
  display: flex;
  align-items: center;
  justify-content: center;
  white-space: nowrap;
  border-right: 1px solid #b4b4b4;
  border-bottom: 1px solid #b4b4b4;
  background: ${(p) => (p.$on ? 'linear-gradient(#fcd89a, #f9c378)' : 'linear-gradient(#fff, #f0f0f0)')};
  color: ${(p) => (p.$on ? '#6a0a60' : '#222')};
`;
const Cell = styled.div`
  display: flex;
  align-items: center;
  justify-content: ${(p) => (p.$center ? 'center' : 'flex-start')};
  padding-left: ${(p) => (p.$center ? 0 : p.$pl || 2)}px;
  white-space: nowrap;
  border-right: 1px solid #b4b4b4;
  border-bottom: 1px solid #b4b4b4;
  background: ${(p) => (p.$on ? '#a8e8d4' : '#c8ffd6')};
  box-shadow: ${(p) => (p.$bar ? 'inset 1px 0 0 #000' : 'none')};
`;
const RowHead = styled(Cell)`
  justify-content: center;
  padding: 0;
  color: ${(p) => (p.$cur ? '#5a0a50' : '#222')};
  background: ${(p) => (p.$cur ? '#fdcf8a' : 'linear-gradient(#fff, #ececec)')};
`;
const Formula = styled(Cell)`
  white-space: normal;
  word-break: break-all;
  line-height: 12px;
  padding-left: 3px;
  padding-right: 3px;
`;
const Grade = styled.span`
  font-family: "DejaVu Sans", sans-serif;
  font-size: 11px;
  font-weight: 700;
`;
const ShapeCell = styled(Cell)`
  padding-left: 26px;
  gap: 3px;
`;
const Bracket = styled.div`
  width: 119px;
  height: 14px;
  flex: none;
  border: 2px solid #111;
  border-top: 0;
  color: #f00000;
  display: flex;
  justify-content: center;
  align-items: flex-start;
  margin-top: 1px;
  line-height: 10px;
`;

const Status = styled.div`
  height: 23px;
  flex: none;
  display: flex;
  gap: 2px;
  padding: 3px 0 1px 2px;
  background: #f0f0f0;
  font-family: ${CJK_FONT};
`;
const StatusCell = styled.div`
  width: ${(p) => (p.$w ? `${p.$w}px` : 'auto')};
  flex: ${(p) => (p.$w ? 'none' : '1')};
  display: flex;
  align-items: center;
  white-space: pre;
  background: #fafafa;
  border: 1px solid #e0e0e0;
  padding-left: 1px;
`;

/* taskbar */
const Taskbar = styled.div`
  height: 40px;
  flex: none;
  display: flex;
  align-items: center;
  background: #0b1216;
  color: #fff;
`;
const StartBtn = styled.div`
  width: 48px;
  height: 100%;
  flex: none;
  background: #000;
  display: flex;
  align-items: center;
  justify-content: center;
`;
const SearchBox = styled.div`
  width: 344px;
  height: 100%;
  flex: none;
  background: #3a3a3a;
  display: flex;
  align-items: center;
  padding: 0 13px 0 9px;
  color: #a0a0a0;
  font: 14px ${CJK_FONT};
`;
const Ring = styled.span`
  width: 20px;
  height: 20px;
  border-radius: 50%;
  border: 3px solid #e8e8e8;
  margin-right: 7px;
  flex: none;
`;
const MicSlot = styled.span`
  margin-left: auto;
`;
const TaskBtn = styled.div`
  position: relative;
  width: ${(p) => p.$w}px;
  height: 100%;
  flex: none;
  display: flex;
  align-items: center;
  justify-content: center;
  margin-left: ${(p) => p.$ml || 0}px;
  background: ${(p) => (p.$active ? '#3c4043' : 'transparent')};
  border-bottom: ${(p) => (p.$open ? '3px solid #76b9ed' : '0')};
  padding-top: ${(p) => (p.$open ? '3px' : '0')};
`;
const TaskSep = styled.span`
  width: 3px;
  height: 20px;
  border-left: 1px solid #555;
  border-right: 1px solid #555;
`;
const TrayText = styled.div`
  width: ${(p) => p.$w}px;
  flex: none;
  margin-left: ${(p) => p.$ml || 0}px;
  font: ${(p) => p.$fs || 12}px/18px ${UI_FONT};
  text-align: center;
  color: #e4e4e4;
  white-space: nowrap;
`;
const NotifyBadge = styled.span`
  position: absolute;
  left: 15px;
  top: 20px;
  width: 14px;
  height: 14px;
  border-radius: 50%;
  background: #444;
  border: 1px solid #ccc;
  color: #fff;
  font-size: 10px;
  font-weight: 700;
  display: flex;
  align-items: center;
  justify-content: center;
`;

/* things that float over the window */
const Marks = styled.svg`
  position: absolute;
  left: 0;
  top: 0;
  pointer-events: none;
`;
const Badge = styled.div`
  position: absolute;
  left: 964px;
  top: -27px;
  width: 46px;
  height: 46px;
  border-radius: 50%;
  background: #4cae4f;
  border: 2px solid #a8dca8;
  box-shadow: 0 2px 5px rgba(0, 0, 0, .35);
  color: #fff;
  font-size: 11px;
  font-weight: 700;
  display: flex;
  align-items: flex-end;
  justify-content: center;
  padding-bottom: 6px;
`;
const Ime = styled.div`
  position: absolute;
  left: 729px;
  top: 4px;
  width: 178px;
  height: 23px;
  background: #f4f8fc;
  border: 1px solid #b4cce4;
  display: flex;
  align-items: center;
  gap: 5px;
  padding-left: 5px;
  color: #2a70b8;
  font: 700 14px ${CJK_FONT};
`;
const ImeLogo = styled.div`
  position: absolute;
  left: 703px;
  top: 1px;
  width: 26px;
  height: 26px;
`;
const ImeDot = styled.span`
  width: 19px;
  text-align: center;
  font-size: 12px;
  margin-top: -4px;
`;

const treeRows = [
  ['l', 'beam', '梁(L)'], ['e', 'slab', '现浇板(B)'], ['c', '', '轴线'], ['o', '', '柱'],
  ['l', 'column', '框柱(Z)'], ['l', 'column', '暗柱(Z)'], ['l', 'column', '端柱(Z)'], ['e', 'tieCol', '构造柱(Z)'],
  ['o', '', '墙'], ['l', 'shear', '剪力墙(Q)'], ['l', 'door', '人防门框墙(RF'], ['l', 'brick', '砌体墙(Q)'],
  ['l', 'hidden', '暗梁(A)'], ['e', 'wallBar', '砌体加筋(Y)'], ['c', '', '门窗洞'], ['o', '', '梁'],
  ['l', 'beam', '梁(L)'], ['e', 'ring', '圈梁(E)'], ['o', '', '板'], ['l', 'slab', '现浇板(B)'],
  ['l', 'spiral', '螺旋板(B)'], ['l', 'cap', '柱帽(V)'], ['l', 'hole', '板洞(N)'], ['l', 'rebar', '板受力筋(S)', true],
  ['l', 'negBar', '板负筋(F)'], ['e', 'band', '楼层板带(H)'], ['o', '', '基础'], ['l', 'footBeam', '基础梁(F)'],
  ['l', 'raft', '筏板基础(M)'], ['l', 'footBeam', '条形基础(T)'],
];

const rows = [
  { n: '1*', id: 'KBSLJ-1.1', shape: '1397', f: '145+1000+120-2*15+272-20+15*d', len: '1667', w: '1.48' },
  { n: '2', id: 'KBSLJ-1.2', shape: '1480', f: '230+1000+120-2*15+270-20+15*d', len: '1750', w: '1.554' },
  { n: '3', id: 'KBSLJ-1.3', shape: '1559', f: '311+1000+120-2*15+268-20+15*d', len: '1829', w: '1.624' },
  { n: '4', id: 'KBSLJ-1.4', shape: '1633', f: '387+1000+120-2*15+266-20+15*d', len: '1903', w: '1.69' },
];
const heads = ['', '筋号', '直径(mm)', '级别', '图号', '图形', '计算公式', '公式描述', '长度(mm)', '根数', '搭接', '损耗(%)', '单重(kg)', '总重(kg)', '钢筋归类', '搭接形式'];

const mainTools = [
  ['定义', 'define'], ['汇总计算', 'sigma', { ml: 7 }], ['云检查', 'cloud', { ml: 7 }],
  ['平齐板顶', 'flush', { muted: true, ml: 9 }], ['查找图元', 'binoc', { ml: 7 }], ['查看钢筋量', 'glasses', { ml: 7 }], ['批量选择', 'batch'],
];
const viewTools = [
  ['俯视', 'topView', { caret: true, cm: 4, ml: 6 }], ['动态观察', 'orbit', { ml: 7 }], ['局部三维', 'cube3d', { ml: 5 }], 'sep',
  ['全屏', 'full'], ['缩放', 'zoom', { caret: true, cm: 6 }], ['平移', 'pan', { caret: true, cm: 6, ml: 6 }],
  ['屏幕旋转', 'screenRot', { caret: true, cm: 1, ml: 2 }], ['sep', '0 5px 0 6px'], ['选择楼层', 'floor', { gap: 0 }],
];
const editTools = [
  ['删除', 'brush'], 'sep', ['复制', 'copy'], ['镜像', 'mirror', { gap: 3 }], 'sep', ['移动', 'move', { gap: 3 }], ['旋转', 'rotate', { gap: 3 }], ['sep', '0 7px 0 7px'],
  ['延伸', 'extend', { muted: true, gap: 3 }], ['修剪', 'trim', { muted: true, gap: 3 }], 'sep', ['打断', 'breakIt', { muted: true, gap: 3 }], ['合并', 'merge', { muted: true, gap: 3 }],
  ['分割', 'split', { muted: true, gap: 3 }], 'sep', ['对齐', 'align', { muted: true, caret: true, gap: 3, ml: 2, cm: 3 }], ['偏移', 'offset', { gap: 3, ml: 5 }], ['拉伸', 'stretch', { gap: 3 }], 'sep', ['设置夹点', 'gripPt', { gap: 3 }],
];
const attrTools = [
  ['属性', 'prop'], ['编辑钢筋', 'editBar', { on: true, ml: 4, gap: 3 }], ['构件列表', 'list', { ml: 4 }], ['拾取构件', 'pick', { ml: 6 }],
];
const axisTools = [
  ['两点', 'twoPt'], ['平行', 'parallel', { ml: 8, gap: 2 }], ['点角', 'anglePt', { caret: true, cm: 5, ml: 7 }], ['三点辅轴', 'arcPt', { caret: true, cm: 5, ml: 5 }],
  ['删除辅轴', 'brush', { ml: 5 }], ['尺寸标注', 'dim', { caret: true, cm: 6, ml: 7, gap: 3 }],
];
const boardTools = [
  ['单板', 'single', { ml: 1, gap: 3 }], ['多板', 'multi', { gap: 3 }], ['自定义', 'custom', { caret: true, cm: 4, gap: 3, ml: 7 }], ['水平', 'horiz', { ml: 5 }],
  ['垂直', 'vert', { on: true, ml: 2, gap: 3 }], ['XY方向', 'xyDir', { ml: 3 }], ['平行边布置受力筋', 'edgeBars', { caret: true, cm: 6, ml: 7, gap: 3 }],
  ['放射筋', '', { caret: true, cm: 4, ml: 6 }], ['自动配筋', 'auto', { ml: 2 }], 'sep', ['交换左右标注', 'swap', { gap: 3 }], ['查看布筋', 'viewBar', { caret: true, cm: 3, gap: 3 }],
];
const snapA = [['正交', 'ortho'], ['对象捕捉', 'snap', { on: true, ml: 4, gap: 3 }], ['动态输入', 'dynInput', { ml: 3 }]];
const snapB = [
  ['交点', 'crossPt', { gap: 3 }], ['垂点', 'perpPt', { on: true, ml: 5, gap: 3 }], ['中点', 'midPt', { on: true, ml: 0, gap: 3 }],
  ['顶点', 'vertexPt', { ml: 3 }], ['坐标', 'coord', { ml: 6 }],
];
const rebarTools = [
  ['', 'navFirst', { ml: 0 }], ['', 'navPrev', { ml: 9 }], ['', 'navNext', { ml: 7 }], ['', 'navLast', { ml: 9 }], ['sep', '0 4px 0 5px'],
  ['', 'rowUp', { ml: 0 }], ['', 'rowDown', { ml: 7 }], ['sep', '0 6px 0 8px'],
  ['插入', 'insert', { muted: true, gap: 3 }], ['删除', 'delRow', { muted: true, ml: 7 }], ['缩尺配筋', 'scale', { ml: 9, gap: 2 }], ['钢筋信息', 'info', { ml: 7 }],
  ['钢筋图库', 'library', { ml: 7 }], ['其他', 'other', { caret: true, ml: 7 }], ['关闭', '', { ml: 8 }], ['sep', '0 5px 0 6px'],
];

const GREEN = '#00e600';
const PURPLE = '#7f00e6';
const DARK = '#a00000';
const RED = '#ff0000';

const CadDrawing = () => {
  const darkH = [182, 192, 383, 452];
  const darkV = [273, 308, 343, 491, 564, 670, 695, 792, 1356];
  const brightV = [640, 1306];
  return (
    <svg width="1196" height="304" viewBox="170 168 1196 304" shapeRendering="crispEdges">
      <defs>
        <pattern id="hatch" width="15" height="15" patternUnits="userSpaceOnUse">
          <path d="M0 15L15 0" stroke="#c8c8c8" strokeWidth="0.7" />
        </pattern>
      </defs>
      <path d="M328 168H1296V313H328zM328 353H1233Q808 521 382 353z" fill="url(#hatch)" />
      <rect x="1296" y="168" width="20" height="145" fill="#b4b4b4" />
      <g fill={GREEN}>
        <rect x="288" y="168" width="40" height="145" />
        <rect x="771" y="168" width="41" height="145" />
        <rect x="812" y="180" width="493" height="25" />
        <rect x="328" y="313" width="958" height="40" />
        <polygon points="681,313 696,248 716,168 755,168 722,313" />
        <path d="M321 353Q806 575 1292 353H1233Q808 521 382 353z" />
      </g>
      <g fill={PURPLE}>
        <rect x="288" y="313" width="40" height="40" />
        <rect x="676" y="313" width="40" height="40" />
        <rect x="1286" y="313" width="40" height="40" />
      </g>

      {darkV.map((x) => <path key={x} d={`M${x} 168V472`} stroke={DARK} />)}
      {darkH.map((y) => <path key={y} d={`M170 ${y}H1366`} stroke={DARK} />)}
      {brightV.map((x) => <path key={x} d={`M${x} 168V472`} stroke="#e00000" />)}
      <path d="M170 254L388 472" stroke="#8a0000" />
      <path d="M695 330L732 168" stroke={DARK} />
      <path d="M660 472L690 355" stroke="#0a8a0a" />

      <path d="M308 168V333M791 168V313M1306 168V333" stroke="#fff" />
      <path d="M308 331.5H1305" stroke="#fff" />
      <path d="M170 333H1366" stroke={RED} />
      <path d="M328 335H1290" stroke="#fff" strokeWidth="2" strokeDasharray="8 8" />
      <path d="M308 333Q806 571 1305 333" stroke="#fff" strokeWidth="1.5" fill="none" />
      <path d="M308 333Q806 571 1305 333" stroke="#fff" strokeWidth="3.5" strokeDasharray="7 4" fill="none" />

      <path d="M757 253H775" stroke="#fff" />
      <path d="M755 253H743V450H756" stroke="#1e88e8" strokeWidth="1.2" fill="none" />
      <path d="M744 313H771M777 245V320M771 247L783 258M783 247L771 258M771 309L783 320M783 309L771 320" stroke="#e040e0" />

      <circle cx="308" cy="181" r="13" fill="none" stroke="#0a6a0a" />
      <circle cx="640" cy="181" r="13" fill="none" stroke="#0a6a0a" />
      <circle cx="1306" cy="181" r="13" fill="none" stroke="#0a6a0a" />
      <circle cx="183" cy="333" r="12" fill="#000" stroke="#0a6a0a" />
      <AxisText x="308" y="186">3</AxisText>
      <AxisText x="640" y="186" $c="#ccc">4</AxisText>
      <AxisText x="1306" y="186">5</AxisText>
      <AxisText x="183" y="338" $c="#ddd">C</AxisText>

      <rect x="304" y="329" width="8" height="8" fill="#a0f040" stroke="#1c8f3a" />
      <rect x="1301" y="329" width="8" height="8" fill="#a0f040" stroke="#1c8f3a" />
      <rect x="803" y="329" width="8" height="8" fill="#111" stroke="#e020d0" strokeWidth="2" />
      <rect x="803" y="448" width="8" height="8" fill="#111" stroke="#e020d0" strokeWidth="2" />

      <path d="M225 423V386" stroke={GREEN} strokeWidth="3" />
      <polygon points="225,375 229,388 221,388" fill={GREEN} />
      <path d="M225 423H264" stroke={RED} strokeWidth="3" />
      <polygon points="274,423 262,419 262,427" fill={RED} />
      <AxisText x="239" y="387" $c={GREEN}>Y</AxisText>
      <AxisText x="266" y="413" $c={RED}>X</AxisText>

      <g shapeRendering="auto">
        <CadText transform="translate(832 250) rotate(-90)" textLength="57" lengthAdjust="spacingAndGlyphs">800</CadText>
        <CadText transform="translate(715 349) rotate(-90)" textLength="56" lengthAdjust="spacingAndGlyphs">200</CadText>
        <CadText transform="translate(715 431) rotate(-90)" textLength="79" lengthAdjust="spacingAndGlyphs">C12@</CadText>
        <CadText transform="translate(715 478) rotate(-90)" textLength="20" lengthAdjust="spacingAndGlyphs">1</CadText>
      </g>
    </svg>
  );
};

const Spinner = ({ w, ml, v }) => (
  <Spin $w={w} $ml={ml}>
    {v}
    <SpinArrows><SpinArrow $up /><SpinArrow /></SpinArrows>
  </Spin>
);

function App() {
  return (
    <Page>
      <Global />
      <TitleBar>
        <I n="glodon" s={14} />
        <TitleText>广联达BIM钢筋算量软件 GGJ2013 - [C:\Users\Administrator.PC-20141127NRHM\Desktop\白龙村-2018-02-02-19-24-35</TitleText>
        <WinButtons>
          <WinBtn>
            <IconSvg viewBox="0 0 12 12" width="12" height="12"><path d="M1 6h10" stroke="#222" /></IconSvg>
          </WinBtn>
          <WinBtn>
            <IconSvg viewBox="0 0 12 12" width="12" height="12"><path d="M1.5 3.5h7v8h-7zM3.5 3.5v-3h7v8h-2" fill="none" stroke="#222" /></IconSvg>
          </WinBtn>
          <WinBtn>
            <IconSvg viewBox="0 0 12 12" width="12" height="12"><path d="M1 1l10 10M11 1L1 11" stroke="#222" /></IconSvg>
          </WinBtn>
        </WinButtons>
      </TitleBar>

      <AccountRow>
        <HelpPanel>识别轴网步骤？</HelpPanel>
        <UserPanel>
          <I n="user" />
          <Slot $ml={4} $fs={12.6}>13907298339</Slot>
          <Caret $ml={6} />
          <Slot $ml={9}>造价豆:0</Slot>
          <Slot $ml={6}><I n="bell" /></Slot>
          <More>»</More>
        </UserPanel>
      </AccountRow>

      <ToolRow $h={28} $gap={3}>
        <Band $w={152} $pl={6}>
          <I n="newDoc" />
          <Slot $ml={5}><I n="open" /></Slot>
          <Caret $ml={5} />
          <Slot $ml={6}><I n="save" /></Slot>
          <Sep $m="0 8px 0 7px" />
          <I n="undo" />
          <Caret $ml={6} />
          <More>»</More>
        </Band>
        <Band $w={545} $pl={2}>
          <Tools items={mainTools} />
          <More>»</More>
        </Band>
        <Band $grow $pl={2}>
          <ModeBtn><I n="flat" /><span>二维</span></ModeBtn>
          <Caret $ml={3} />
          <Tools items={viewTools} />
          <More>»</More>
        </Band>
      </ToolRow>

      <Workspace>
        <LeftPanel>
          <PanelTitle>
            <span>模块导航栏</span>
            <I n="pin" s={12} />
            <IconSvg viewBox="0 0 10 10" width="9" height="9"><path d="M1 1l8 8M9 1L1 9" stroke="#444" /></IconSvg>
          </PanelTitle>
          <NavBtn $h={23}>工程设置</NavBtn>
          <NavBtn $h={23}>绘图输入</NavBtn>
          <TreeBox>
            <TreeTools><I n="plusNode" /><I n="minusNode" /></TreeTools>
            <TreeMid>
              <TreeList>
                {treeRows.map(([kind, icon, text, sel], i) => {
                  const leaf = kind === 'l' || kind === 'e';
                  return (
                    <TreeRow key={i} $leaf={leaf} $last={kind === 'e'}>
                      {!leaf && (
                        <>
                          <Chevron>
                            <IconSvg viewBox="0 0 10 10" width="8" height="8">
                              <path d={kind === 'o' ? 'M1 3l4 4 4-4' : 'M3 1l4 4-4 4'} fill="none" stroke={kind === 'o' ? '#444' : '#aaa'} strokeWidth="1.6" />
                            </IconSvg>
                          </Chevron>
                          <I n={kind === 'o' ? 'folderOpen' : 'folderClosed'} />
                        </>
                      )}
                      {leaf && <I n={icon} />}
                      <TreeText $sel={sel}><Mix>{text}</Mix></TreeText>
                    </TreeRow>
                  );
                })}
              </TreeList>
              <VScroll>
                <ArrowBtn><Arrow d="up" /></ArrowBtn>
                <ThumbV $h={267} $mt={47} />
                <ArrowBtn $mt={120}><Arrow d="down" /></ArrowBtn>
              </VScroll>
            </TreeMid>
            <HScroll>
              <ArrowBtn><Arrow d="left" /></ArrowBtn>
              <ThumbH $w={102} $ml={1} />
              <ArrowBtn $ml={5}><Arrow d="right" /></ArrowBtn>
            </HScroll>
          </TreeBox>
          <NavBtn $h={22}>单构件输入</NavBtn>
          <NavBtn $h={22}>报表预览</NavBtn>
        </LeftPanel>

        <Right>
          <ToolRow $ml={1}>
            <Band $w={790}>
              <Grip $m="0 3px 0 4px" />
              <Tools items={editTools} />
            </Band>
          </ToolRow>
          <ToolRow $gap={4} $mt={1} $ml={2}>
            <Band $w={636}>
              <Grip $m="0 1px 0 2px" />
              <Combo $w={58}>第6层<Caret /></Combo>
              <Combo $w={68} $ml={3}>板<Caret /></Combo>
              <Combo $w={69} $ml={4}>板受力筋<Caret /></Combo>
              <Combo $w={69} $ml={3}>KBSLJ-1<Caret /></Combo>
              <Combo $w={71} $ml={2}>分层板1<Caret /></Combo>
              <Sep $m="0 4px 0 5px" />
              <Tools items={attrTools} />
            </Band>
            <Band $w={421}>
              <Grip $m="0 5px 0 2px" />
              <Tools items={axisTools} />
            </Band>
          </ToolRow>
          <ToolRow $h={27} $gap={3} $mt={2} $ml={2}>
            <Band $w={1158}>
              <Grip $m="0 1px 0 2px" />
              <ToolItem $ml={0} $on $gap={3}><I n="cursor" /><span>选择</span></ToolItem>
              <Caret $ml={3} />
              <Sep $m="0 7px 0 5px" />
              <Tools items={[['直线', 'lineTool', { muted: true, gap: 2 }], ['三点画弧', 'arcTool', { muted: true, caret: true, cm: 6, ml: 7 }]]} />
              <Combo $w={56} $h={24} $ml={2} $empty><span /><Caret $muted /></Combo>
              <ToolItem $ml={5} $muted $gap={3}><I n="rectTool" /><span>矩形</span></ToolItem>
              <Sep />
              <Tools items={boardTools} />
              <More>»</More>
            </Band>
            <Band $grow><Grip $m="0 0 0 4px" /></Band>
          </ToolRow>

          <Canvas><CadDrawing /></Canvas>

          <ToolRow $h={25} $gap={5} $ml={3}>
            <Band $w={207}><Grip /><Tools items={snapA} /></Band>
            <Band $w={260}><Grip $m="0 4px 0 1px" /><Tools items={snapB} /></Band>
            <Band $w={408}>
              <Grip $m="0 1px 0 1px" />
              <Combo $w={56} $h={24}>不偏移<Caret /></Combo>
              <Sep $m="0 3px 0 5px" />
              <SmallText $c="#999">X=</SmallText>
              <Spinner w={58} ml={3} v="0" />
              <SmallText $ml={1}>mm</SmallText>
              <SmallText $ml={5}>Y=</SmallText>
              <Spinner w={58} ml={3} v="0" />
              <SmallText $ml={1}>mm</SmallText>
              <Sep $m="0 3px 0 4px" />
              <Check $ml={1} />
              <SmallText $ml={8} $c="#222" $fs={12}>旋转</SmallText>
              <Spinner w={68} ml={5} v="0.000" />
              <SmallText $ml={3}>°</SmallText>
            </Band>
          </ToolRow>

          <Lower>
            <LowerGrip><I n="closeSmall" s={9} /></LowerGrip>
            <LowerBody>
              <ToolRow $h={23} $mt={3}>
                <Band $grow $pl={2}>
                  <Tools items={rebarTools} />
                  <TotalText>单构件钢筋总重(kg) : 97.133</TotalText>
                </Band>
              </ToolRow>
              <GridShell>
                <GridMid>
                  <GridClip>
                    <Table>
                      {heads.map((h, i) => <Head key={i} $on={i === 2}><Mix>{h}</Mix></Head>)}
                      {rows.map((r, i) => (
                        <React.Fragment key={r.n}>
                          <RowHead $cur={i === 0}><Latin>{r.n}</Latin></RowHead>
                          <Cell><Latin>{r.id}</Latin></Cell>
                          <Cell $bar $on={i === 0}><Latin>12</Latin></Cell>
                          <Cell $center><Grade>Φ</Grade></Cell>
                          <Cell><Latin>64</Latin></Cell>
                          <ShapeCell>
                            <Latin>90</Latin>
                            <Bracket><Latin>{r.shape}</Latin></Bracket>
                            <Latin>180</Latin>
                          </ShapeCell>
                          <Formula><Latin>{r.f}</Latin></Formula>
                          <Cell><Mix>净长+左标注+弯折+设定锚固</Mix></Cell>
                          <Cell><Latin>{r.len}</Latin></Cell>
                          <Cell><Latin>1</Latin></Cell>
                          <Cell><Latin>0</Latin></Cell>
                          <Cell><Latin>0</Latin></Cell>
                          <Cell><Latin>{r.w}</Latin></Cell>
                          <Cell><Latin>{r.w}</Latin></Cell>
                          <Cell $pl={6}>直筋</Cell>
                          <Cell>绑扎</Cell>
                        </React.Fragment>
                      ))}
                    </Table>
                  </GridClip>
                  <VScroll $w={17}>
                    <ArrowBtn $s={17}><Arrow d="up" /></ArrowBtn>
                    <ThumbV $h={17} $mt={1} />
                    <ArrowBtn $s={17} $mt={102}><Arrow d="down" /></ArrowBtn>
                  </VScroll>
                </GridMid>
                <HScroll $h={15}>
                  <ArrowBtn $s={17}><Arrow d="left" /></ArrowBtn>
                  <ThumbH $w={811} />
                  <ArrowEnd $s={17}><Arrow d="right" /></ArrowEnd>
                </HScroll>
              </GridShell>
            </LowerBody>
          </Lower>
        </Right>
      </Workspace>

      <Status>
        <StatusCell $w={146}><Latin>X=15780 Y=8231</Latin></StatusCell>
        <StatusCell $w={78}><Mix>层高:2.8m</Mix></StatusCell>
        <StatusCell $w={98}><Mix>底标高:17.55m</Mix></StatusCell>
        <StatusCell $w={48}><Mix> 1(3)</Mix></StatusCell>
        <StatusCell>按鼠标左键指定第一个角点，或拾取构件图元</StatusCell>
        <StatusCell $w={69}><Latin>601 FPS</Latin></StatusCell>
      </Status>

      <Taskbar>
        <StartBtn><I n="winLogo" /></StartBtn>
        <SearchBox>
          <Ring />在这里输入你要搜索的内容
          <MicSlot><I n="micGray" s={18} /></MicSlot>
        </SearchBox>
        <TaskBtn $w={46}><I n="taskView" s={18} /></TaskBtn>
        <TaskBtn $w={54}><I n="fan" s={24} /></TaskBtn>
        <TaskBtn $w={52}><I n="ieGray" s={24} /></TaskBtn>
        <TaskBtn $w={46}><I n="swirl" s={20} /></TaskBtn>
        <TaskBtn $w={22}><TaskSep /></TaskBtn>
        <TaskBtn $w={48}><I n="edge" s={24} /></TaskBtn>
        <TaskBtn $w={46}><I n="ieColor" s={24} /></TaskBtn>
        <TaskBtn $w={44}><I n="folderTask" s={22} /></TaskBtn>
        <TaskBtn $w={40} $active $open><I n="glodon" s={24} /></TaskBtn>
        <TaskBtn $w={36} $ml={6} $open><I n="notes" s={24} /></TaskBtn>
        <TaskBtn $w={34} $ml={7} $open><I n="gApp" s={24} /></TaskBtn>
        <TaskBtn $w={34} $ml={9} $open><I n="greenE" s={22} /></TaskBtn>
        <TaskBtn $w={41}><TaskSep /></TaskBtn>
        <TrayText $w={24} $ml={-8}>链接</TrayText>
        <TrayText $w={48} $ml={19}>66%<br />CPU使用</TrayText>
        <TaskBtn $w={18} $ml={16}><I n="chevronUp" s={14} /></TaskBtn>
        <TaskBtn $w={24} $ml={4}><I n="plug" /></TaskBtn>
        <TaskBtn $w={24}><I n="wifi" s={14} /></TaskBtn>
        <TaskBtn $w={20}><I n="speaker" /></TaskBtn>
        <TaskBtn $w={28} $ml={6}><I n="keyboard" s={22} /></TaskBtn>
        <TrayText $w={14} $ml={6} $fs={13}>英</TrayText>
        <TaskBtn $w={20} $ml={12}><I n="sRed" /></TaskBtn>
        <TrayText $w={60} $ml={13}>14:24<br />2018/5/1</TrayText>
        <TaskBtn $w={30} $ml={14}><I n="notify" s={16} /><NotifyBadge>1</NotifyBadge></TaskBtn>
      </Taskbar>

      <Badge>62</Badge>
      <ImeLogo><I n="sRed" s={26} /></ImeLogo>
      <Ime>
        英
        <ImeDot>•,</ImeDot>
        <I n="smile" s={17} /><I n="micBlue" s={17} /><I n="keysBlue" s={17} /><I n="personCard" s={17} /><I n="shirt" s={15} /><I n="wrench" s={15} />
      </Ime>
      <Marks width="1366" height="768" viewBox="0 0 1366 768">
        <ellipse cx="626" cy="160" rx="54" ry="43" fill="none" stroke="#f00" strokeWidth="7" />
        <ellipse cx="758" cy="153" rx="62" ry="36" fill="none" stroke="#f00" strokeWidth="7" />
      </Marks>
    </Page>
  );
}

export default App;
